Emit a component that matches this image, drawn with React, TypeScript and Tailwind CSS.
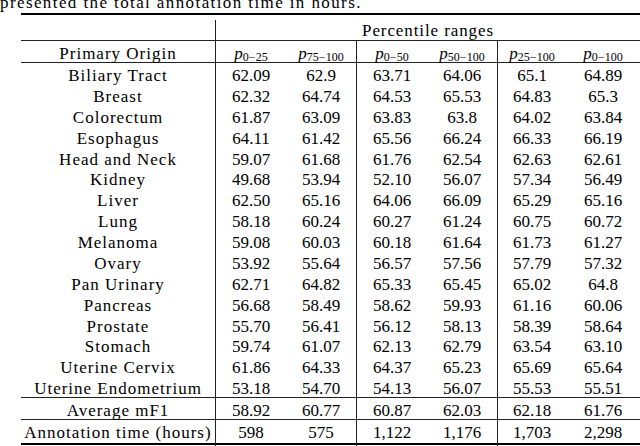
import React from 'react';

type Row = [string, string, string, string, string, string, string];

const ROWS: Row[] = [
  ['Biliary Tract', '62.09', '62.9', '63.71', '64.06', '65.1', '64.89'],
  ['Breast', '62.32', '64.74', '64.53', '65.53', '64.83', '65.3'],
  ['Colorectum', '61.87', '63.09', '63.83', '63.8', '64.02', '63.84'],
  ['Esophagus', '64.11', '61.42', '65.56', '66.24', '66.33', '66.19'],
  ['Head and Neck', '59.07', '61.68', '61.76', '62.54', '62.63', '62.61'],
  ['Kidney', '49.68', '53.94', '52.10', '56.07', '57.34', '56.49'],
  ['Liver', '62.50', '65.16', '64.06', '66.09', '65.29', '65.16'],
  ['Lung', '58.18', '60.24', '60.27', '61.24', '60.75', '60.72'],
  ['Melanoma', '59.08', '60.03', '60.18', '61.64', '61.73', '61.27'],
  ['Ovary', '53.92', '55.64', '56.57', '57.56', '57.79', '57.32'],
  ['Pan Urinary', '62.71', '64.82', '65.33', '65.45', '65.02', '64.8'],
  ['Pancreas', '56.68', '58.49', '58.62', '59.93', '61.16', '60.06'],
  ['Prostate', '55.70', '56.41', '56.12', '58.13', '58.39', '58.64'],
  ['Stomach', '59.74', '61.07', '62.13', '62.79', '63.54', '63.10'],
  ['Uterine Cervix', '61.86', '64.33', '64.37', '65.23', '65.69', '65.64'],
  ['Uterine Endometrium', '53.18', '54.70', '54.13', '56.07', '55.53', '55.51'],
];

const GRID = 'grid grid-cols-[195px_70px_71px_70px_71px_68px_74px]';
const LINE = 'border-[#222]';

function P({ sub }: { sub: string }) {
  return (
    <span>
      <i>p</i>
      <span className="text-[12px] relative top-[2px]">{sub}</span>
    </span>
  );
}

function Label({ children }: { children: React.ReactNode }) {
  return <span className="tracking-[1px]">{children}</span>;
}

function Cells({ cells, h }: { cells: React.ReactNode[]; h: string }) {
  return (
    <div className={`${GRID} ${h}`}>
      {cells.map((c, i) => (
        <div
          key={i}
          className={`flex items-center justify-center pb-[2px] whitespace-nowrap ${
            i === 0 || i === 2 || i === 4 ? `border-r ${LINE}` : ''
          }`}
        >
          {c}
        </div>
      ))}
    </div>
  );
}

export default function App() {
  return (
    <div
      className="w-[640px] h-[446px] overflow-hidden bg-white text-black text-[17px]"
      style={{ fontFamily: '"Liberation Serif", serif' }}
    >
      <p className="-mt-[6px] mb-[2px] leading-[17px] whitespace-nowrap tracking-[1.4px]">
        presented the total annotation time in hours.
      </p>

      <div className="ml-[21px] w-[619px]">
        {/* top rule */}
        <div className="h-[2px] bg-black" />
        <div className="h-[5px]" />

        {/* group header */}
        <div className="grid grid-cols-[195px_424px] h-[20px] leading-none">
          <div className={`border-r ${LINE}`} />
          <div className="flex items-center justify-center tracking-[0.9px]">Percentile ranges</div>
        </div>
        <div className="h-px bg-[#222]" />

        <Cells
          h="h-[21px]"
          cells={[
            <Label>Primary Origin</Label>,
            <P sub="0−25" />,
            <P sub="75−100" />,
            <P sub="0−50" />,
            <P sub="50−100" />,
            <P sub="25−100" />,
            <P sub="0−100" />,
          ]}
        />
        <div className="h-px bg-[#222]" />

        {/* data rows */}
        <div className="grid grid-rows-[repeat(16,20.875px)]">
          {ROWS.map((r) => (
            <Cells
              key={r[0]}
              h="h-[20.875px]"
              cells={r.map((v, i) => (i === 0 ? <Label>{v}</Label> : v))}
            />
          ))}
        </div>
        <div className="h-px bg-[#222]" />

        <Cells
          h="h-[21px]"
          cells={[
            <Label>Average mF1</Label>,
            '58.92',
            '60.77',
            '60.87',
            '62.03',
            '62.18',
            '61.76',
          ]}
        />
        <div className="h-px bg-[#222]" />

        <Cells
          h="h-[20px]"
          cells={[
            <Label>Annotation time (hours)</Label>,
            '598',
            '575',
            '1,122',
            '1,176',
            '1,703',
            '2,298',
          ]}
        />
        <div className="h-[3px]" />
        {/* bottom rule */}
        <div className="h-[2px] bg-black" />
      </div>
    </div>
  );
}
